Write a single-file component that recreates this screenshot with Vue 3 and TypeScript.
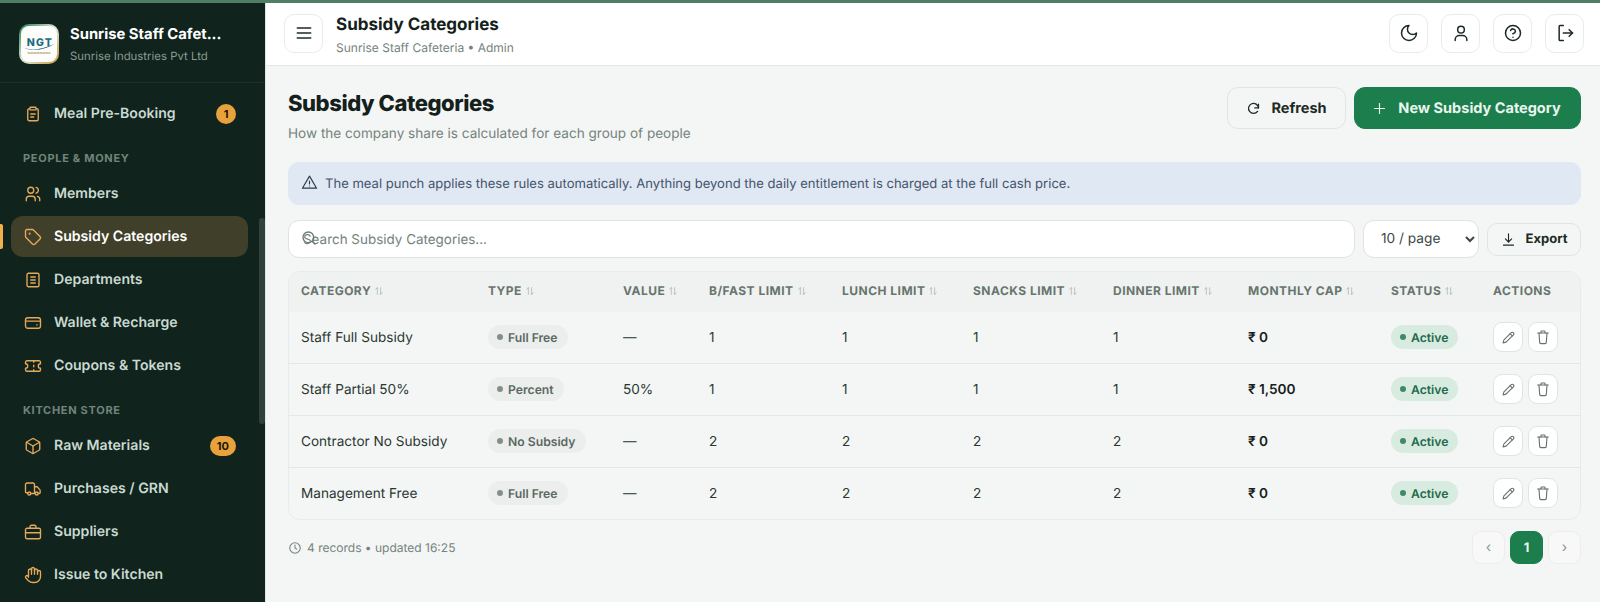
<script setup lang="ts">
type NavItem = { label: string; icon: string; badge?: string; active?: boolean }
type NavEntry = NavItem | { section: string }

const icons: Record<string, string[]> = {
  clipboard: ['M9 3h6a1 1 0 0 1 1 1v1h1a2 2 0 0 1 2 2v12a2 2 0 0 1-2 2H7a2 2 0 0 1-2-2V7a2 2 0 0 1 2-2h1V4a1 1 0 0 1 1-1z', 'M8 6.5h8', 'M9 12h6', 'M9 16h4'],
  users: ['M9 11a4 4 0 1 0 0-8 4 4 0 0 0 0 8z', 'M3 21v-2a4 4 0 0 1 4-4h4a4 4 0 0 1 4 4v2', 'M16 3.1a4 4 0 0 1 0 7.8', 'M21 21v-2a4 4 0 0 0-3-3.9'],
  tag: ['M12.6 2.6A2 2 0 0 0 11.2 2H4a2 2 0 0 0-2 2v7.2a2 2 0 0 0 .6 1.4l8.7 8.7a2.4 2.4 0 0 0 3.4 0l6.6-6.6a2.4 2.4 0 0 0 0-3.4z', 'M7.5 8a.5.5 0 1 0 0-1 .5.5 0 0 0 0 1z'],
  notebook: ['M6 3h12a2 2 0 0 1 2 2v14a2 2 0 0 1-2 2H6a2 2 0 0 1-2-2V5a2 2 0 0 1 2-2z', 'M9 8h6', 'M9 12h6', 'M9 16h6'],
  wallet: ['M5 5h14a3 3 0 0 1 3 3v8a3 3 0 0 1-3 3H5a3 3 0 0 1-3-3V8a3 3 0 0 1 3-3z', 'M2 9.5h20', 'M17 14.5h.5'],
  ticket: ['M2 9a3 3 0 0 1 0 6v2a2 2 0 0 0 2 2h16a2 2 0 0 0 2-2v-2a3 3 0 0 1 0-6V7a2 2 0 0 0-2-2H4a2 2 0 0 0-2 2z', 'M13 5v2', 'M13 17v2', 'M13 11v2'],
  box: ['M21 8a2 2 0 0 0-1-1.7l-7-4a2 2 0 0 0-2 0l-7 4A2 2 0 0 0 3 8v8a2 2 0 0 0 1 1.7l7 4a2 2 0 0 0 2 0l7-4a2 2 0 0 0 1-1.7z', 'M3.3 7 12 12l8.7-5', 'M12 22V12'],
  truck: ['M14 17V6a2 2 0 0 0-2-2H4a2 2 0 0 0-2 2v10a1 1 0 0 0 1 1h2', 'M14 9h3.5l4 4.5V17a1 1 0 0 1-1 1H19', 'M9 18h5', 'M7 20a2 2 0 1 0 0-4 2 2 0 0 0 0 4z', 'M17 20a2 2 0 1 0 0-4 2 2 0 0 0 0 4z'],
  briefcase: ['M4 7h16a2 2 0 0 1 2 2v10a2 2 0 0 1-2 2H4a2 2 0 0 1-2-2V9a2 2 0 0 1 2-2z', 'M8 7V5a2 2 0 0 1 2-2h4a2 2 0 0 1 2 2v2', 'M2 13h20'],
  hand: ['M18 11V6a2 2 0 0 0-4 0v-2a2 2 0 0 0-4 0v2a2 2 0 0 0-4 0v8', 'M14 6v5', 'M10 4v7', 'M18 8a2 2 0 0 1 4 0v6a8 8 0 0 1-8 8h-2c-2.8 0-4.5-.9-6-2.4l-3.6-3.6a2 2 0 0 1 2.8-2.8L6 15'],
  menu: ['M4 6h16', 'M4 12h16', 'M4 18h16'],
  moon: ['M12 3a6 6 0 0 0 9 9 9 9 0 1 1-9-9z'],
  user: ['M12 12a4 4 0 1 0 0-8 4 4 0 0 0 0 8z', 'M5 21v-1a5 5 0 0 1 5-5h4a5 5 0 0 1 5 5v1'],
  help: ['M12 21a9 9 0 1 0 0-18 9 9 0 0 0 0 18z', 'M9.1 9a3 3 0 0 1 5.8 1c0 2-3 3-3 3', 'M12 17h.01'],
  logout: ['M10 3H6a1 1 0 0 0-1 1v16a1 1 0 0 0 1 1h4', 'M10 12h11', 'M17 8l4 4-4 4'],
  refresh: ['M20 11a8 8 0 1 0-1.5 5.5', 'M20 5v6h-6'],
  plus: ['M12 5v14', 'M5 12h14'],
  alert: ['M12 3 2 20h20z', 'M12 10v4', 'M12 17h.01'],
  search: ['M11 19a8 8 0 1 0 0-16 8 8 0 0 0 0 16z', 'M21 21l-4.3-4.3'],
  download: ['M12 3v13', 'M7 11l5 5 5-5', 'M4 21h16'],
  pencil: ['M17 3a2.8 2.8 0 0 1 4 4L7.5 20.5 2 22l1.5-5.5z', 'M15 5l4 4'],
  trash: ['M4 6h16', 'M6 6l1 14a2 2 0 0 0 2 2h6a2 2 0 0 0 2-2l1-14', 'M9 6V4a1 1 0 0 1 1-1h4a1 1 0 0 1 1 1v2'],
  clock: ['M12 21a9 9 0 1 0 0-18 9 9 0 0 0 0 18z', 'M12 7v5l3 2'],
  sort: ['M8 4v16', 'M4 8l4-4 1 1', 'M16 20V4', 'M20 16l-4 4-1-1'],
}

const nav: NavEntry[] = [
  { label: 'Meal Pre-Booking', icon: 'clipboard', badge: '1' },
  { section: 'People & Money' },
  { label: 'Members', icon: 'users' },
  { label: 'Subsidy Categories', icon: 'tag', active: true },
  { label: 'Departments', icon: 'notebook' },
  { label: 'Wallet & Recharge', icon: 'wallet' },
  { label: 'Coupons & Tokens', icon: 'ticket' },
  { section: 'Kitchen Store' },
  { label: 'Raw Materials', icon: 'box', badge: '10' },
  { label: 'Purchases / GRN', icon: 'truck' },
  { label: 'Suppliers', icon: 'briefcase' },
  { label: 'Issue to Kitchen', icon: 'hand' },
]

const columns = [
  { label: 'Category', width: 187 },
  { label: 'Type', width: 135 },
  { label: 'Value', width: 86 },
  { label: 'B/Fast Limit', width: 133 },
  { label: 'Lunch Limit', width: 131 },
  { label: 'Snacks Limit', width: 140 },
  { label: 'Dinner Limit', width: 135 },
  { label: 'Monthly Cap', width: 143 },
  { label: 'Status', width: 102 },
  { label: 'Actions', width: 101, noSort: true },
]

const rows = [
  { name: 'Staff Full Subsidy', type: 'Full Free', value: '—', limit: 1, cap: '₹ 0' },
  { name: 'Staff Partial 50%', type: 'Percent', value: '50%', limit: 1, cap: '₹ 1,500' },
  { name: 'Contractor No Subsidy', type: 'No Subsidy', value: '—', limit: 2, cap: '₹ 0' },
  { name: 'Management Free', type: 'Full Free', value: '—', limit: 2, cap: '₹ 0' },
]

const topIcons = ['moon', 'user', 'help', 'logout']

function isSection(entry: NavEntry): entry is { section: string } {
  return 'section' in entry
}
</script>

<template>
  <div class="strip"></div>
  <div class="shell">
    <aside class="sidebar">
      <div class="brand">
        <div class="logo">
          <svg viewBox="0 0 40 40" width="40" height="40">
            <defs>
              <linearGradient id="ring" x1="0" y1="0" x2="1" y2="1">
                <stop offset="0" stop-color="#1f7a4d" />
                <stop offset="0.5" stop-color="#dfe5d8" />
                <stop offset="1" stop-color="#c59a3c" />
              </linearGradient>
            </defs>
            <rect width="40" height="40" rx="10" fill="url(#ring)" />
            <rect x="2" y="2" width="36" height="36" rx="8" fill="#fdfdfb" />
            <text x="21" y="22" text-anchor="middle" font-size="10.5" font-weight="800" letter-spacing="1.2" fill="#1c6a80">NGT</text>
            <path d="M3 23c9 4 19 3 32-3-9 6-22 8-32 3z" fill="#12566f" />
            <path d="M9 29h22" class="logo-line" />
          </svg>
        </div>
        <div class="brand-text">
          <div class="brand-name">Sunrise Staff Cafet...</div>
          <div class="brand-org">Sunrise Industries Pvt Ltd</div>
        </div>
      </div>
      <nav class="nav">
        <template v-for="entry in nav" :key="isSection(entry) ? entry.section : entry.label">
          <div v-if="isSection(entry)" class="nav-section">{{ entry.section }}</div>
          <div v-else class="nav-item" :class="{ 'nav-item--active': entry.active }">
            <svg class="nav-icon" viewBox="0 0 24 24"><path v-for="d in icons[entry.icon]" :key="d" :d="d" /></svg>
            <span class="nav-label">{{ entry.label }}</span>
            <span v-if="entry.badge" class="nav-badge">{{ entry.badge }}</span>
          </div>
        </template>
      </nav>
      <div class="nav-thumb"></div>
    </aside>

    <div class="content">
      <header class="topbar">
        <button class="icon-btn" type="button">
          <svg class="top-icon" viewBox="0 0 24 24"><path v-for="d in icons.menu" :key="d" :d="d" /></svg>
        </button>
        <div class="topbar-text">
          <div class="topbar-title">Subsidy Categories</div>
          <div class="topbar-sub">Sunrise Staff Cafeteria • Admin</div>
        </div>
        <div class="topbar-actions">
          <button v-for="name in topIcons" :key="name" class="icon-btn" type="button">
            <svg class="top-icon" viewBox="0 0 24 24"><path v-for="d in icons[name]" :key="d" :d="d" /></svg>
          </button>
        </div>
      </header>

      <main class="main">
        <div class="page-head">
          <div>
            <h1 class="page-title">Subsidy Categories</h1>
            <p class="page-sub">How the company share is calculated for each group of people</p>
          </div>
          <div class="page-actions">
            <button class="btn btn--ghost" type="button">
              <svg class="btn-icon" viewBox="0 0 24 24"><path v-for="d in icons.refresh" :key="d" :d="d" /></svg>
              Refresh
            </button>
            <button class="btn btn--primary" type="button">
              <svg class="btn-icon btn-icon--plus" viewBox="0 0 24 24"><path v-for="d in icons.plus" :key="d" :d="d" /></svg>
              New Subsidy Category
            </button>
          </div>
        </div>

        <div class="notice">
          <svg class="notice-icon" viewBox="0 0 24 24"><path v-for="d in icons.alert" :key="d" :d="d" /></svg>
          The meal punch applies these rules automatically. Anything beyond the daily entitlement is charged at the full cash price.
        </div>

        <div class="filters">
          <div class="search">
            <svg class="search-icon" viewBox="0 0 24 24"><path v-for="d in icons.search" :key="d" :d="d" /></svg>
            <input class="search-input" type="text" placeholder="Search Subsidy Categories..." />
          </div>
          <select class="page-size">
            <option>10 / page</option>
          </select>
          <button class="export" type="button">
            <svg class="export-icon" viewBox="0 0 24 24"><path v-for="d in icons.download" :key="d" :d="d" /></svg>
            Export
          </button>
        </div>

        <div class="table-wrap">
          <table class="table">
            <colgroup>
              <col v-for="col in columns" :key="col.label" :style="{ width: col.width + 'px' }" />
            </colgroup>
            <thead>
              <tr>
                <th v-for="col in columns" :key="col.label">
                  {{ col.label }}<svg v-if="!col.noSort" class="sort" viewBox="0 0 24 24"><path v-for="d in icons.sort" :key="d" :d="d" /></svg>
                </th>
              </tr>
            </thead>
            <tbody>
              <tr v-for="row in rows" :key="row.name">
                <td>{{ row.name }}</td>
                <td><span class="chip"><i class="dot"></i>{{ row.type }}</span></td>
                <td>{{ row.value }}</td>
                <td>{{ row.limit }}</td>
                <td>{{ row.limit }}</td>
                <td>{{ row.limit }}</td>
                <td>{{ row.limit }}</td>
                <td class="cap">{{ row.cap }}</td>
                <td><span class="chip chip--green"><i class="dot"></i>Active</span></td>
                <td>
                  <div class="row-actions">
                    <button class="row-btn" type="button">
                      <svg class="row-icon row-icon--pencil" viewBox="0 0 24 24"><path v-for="d in icons.pencil" :key="d" :d="d" /></svg>
                    </button>
                    <button class="row-btn" type="button">
                      <svg class="row-icon" viewBox="0 0 24 24"><path v-for="d in icons.trash" :key="d" :d="d" /></svg>
                    </button>
                  </div>
                </td>
              </tr>
            </tbody>
          </table>
        </div>

        <div class="table-foot">
          <div class="records">
            <svg class="clock" viewBox="0 0 24 24"><path v-for="d in icons.clock" :key="d" :d="d" /></svg>
            4 records • updated 16:25
          </div>
          <div class="pager">
            <button class="page-btn" type="button">‹</button>
            <button class="page-btn page-btn--on" type="button">1</button>
            <button class="page-btn" type="button">›</button>
          </div>
        </div>
      </main>
    </div>
  </div>
</template>

<style>
html,
body {
  margin: 0;
  height: 100%;
  overflow: hidden;
}
</style>

<style scoped>
* {
  box-sizing: border-box;
}
svg {
  fill: none;
  stroke: currentColor;
  stroke-width: 2;
  stroke-linecap: round;
  stroke-linejoin: round;
  flex: none;
}
button,
input,
select {
  font-family: inherit;
  text-rendering: geometricPrecision;
}
.strip {
  height: 3px;
  background: #4f7f63;
}
.shell {
  display: flex;
  height: 599px;
  overflow: hidden;
  font-family: Inter, "Liberation Sans", sans-serif;
  text-rendering: geometricPrecision;
  color: #14211b;
  background: #f4f6f5;
}

/* sidebar */
.sidebar {
  position: relative;
  flex: none;
  width: 266px;
  background: #10231c;
  border-right: 1px solid #dfe4e1;
  overflow: hidden;
}
.brand {
  display: flex;
  align-items: center;
  gap: 11px;
  height: 80px;
  padding: 2px 19px 0;
  border-bottom: 1px solid #1d3029;
}
.logo {
  width: 40px;
  height: 40px;
  flex: none;
}
.logo svg {
  stroke: none;
  display: block;
  font-family: Inter, sans-serif;
}
.logo path {
  stroke: none;
}
.logo .logo-line {
  stroke: #9a8a55;
  stroke-width: 1;
  stroke-dasharray: 2 1;
}
.brand-name {
  font-size: 14.8px;
  font-weight: 700;
  color: #fff;
  line-height: 20px;
  white-space: nowrap;
}
.brand-org {
  margin-top: 4px;
  font-size: 11.4px;
  line-height: 16px;
  color: #8b9c94;
  white-space: nowrap;
}
.nav {
  display: flex;
  flex-direction: column;
  gap: 2px;
  padding: 10px 17px 0 11px;
}
.nav-section {
  padding: 14px 12px 5px;
  font-size: 11px;
  font-weight: 700;
  line-height: 16px;
  letter-spacing: 0.7px;
  text-transform: uppercase;
  color: #71857b;
}
.nav-item {
  position: relative;
  display: flex;
  align-items: center;
  flex: none;
  height: 41px;
  padding: 0 12px 0 13px;
  border-radius: 12px;
  font-size: 14.1px;
  font-weight: 600;
  color: #c9dad2;
}
.nav-item--active {
  background: #40402a;
  color: #fff;
}
.nav-item--active::before {
  content: "";
  position: absolute;
  left: -11px;
  top: 8px;
  width: 3px;
  height: 25px;
  border-radius: 0 2px 2px 0;
  background: #f0b14a;
}
.nav-icon {
  width: 18px;
  height: 18px;
  margin-right: 12px;
  stroke: #e6a95a;
  stroke-width: 1.8;
}
.nav-label {
  flex: 1;
  white-space: nowrap;
}
.nav-badge {
  min-width: 20px;
  height: 20px;
  padding: 0 7px;
  border-radius: 10px;
  background: #e9a23b;
  color: #1b1608;
  font-size: 11px;
  font-weight: 700;
  line-height: 20px;
  text-align: center;
}
.nav-thumb {
  position: absolute;
  left: 259px;
  top: 215px;
  width: 6px;
  height: 206px;
  border-radius: 3px;
  background: #2e423a;
}

/* top bar */
.content {
  flex: 1;
  min-width: 0;
  display: flex;
  flex-direction: column;
}
.topbar {
  display: flex;
  align-items: center;
  flex: none;
  height: 63px;
  padding: 0 16px 2px 18px;
  background: #fff;
  border-bottom: 1px solid #e3e7e5;
}
.icon-btn {
  display: inline-flex;
  align-items: center;
  justify-content: center;
  width: 39px;
  height: 39px;
  padding: 0;
  border: 1px solid #e8ecea;
  border-radius: 10px;
  background: #fff;
  color: #1d2a24;
}
.top-icon {
  width: 20px;
  height: 20px;
  stroke-width: 1.8;
}
.topbar-text {
  margin: 4px 0 0 13px;
}
.topbar-title {
  font-size: 17px;
  font-weight: 700;
  line-height: 24px;
  color: #14211b;
}
.topbar-sub {
  margin-top: 2px;
  font-size: 12px;
  line-height: 18px;
  color: #75837c;
}
.topbar-actions {
  display: flex;
  gap: 13px;
  margin-left: auto;
}

/* main */
.main {
  flex: 1;
  padding: 21px 19px 0 22px;
}
.page-head {
  display: flex;
  justify-content: space-between;
  height: 75px;
}
.page-title {
  margin: 3px 0 0;
  font-size: 22px;
  font-weight: 800;
  line-height: 28px;
  letter-spacing: -0.44px;
  color: #14211b;
}
.page-sub {
  margin: 6px 0 0;
  font-size: 13.57px;
  line-height: 20px;
  color: #75837c;
}
.page-actions {
  display: flex;
  gap: 8px;
  height: 42px;
}
.btn {
  display: inline-flex;
  align-items: center;
  justify-content: center;
  gap: 10px;
  border-radius: 11px;
  font-size: 14.5px;
  font-weight: 700;
  white-space: nowrap;
}
.btn--ghost {
  width: 119px;
  border: 1px solid #e0e4e2;
  background: #f4f6f5;
  color: #1d2a24;
}
.btn--primary {
  width: 227px;
  padding: 0 3px 0 0;
  border: 1px solid #1c7d4d;
  background: #1c7d4d;
  color: #eaf5ef;
}
.btn-icon {
  width: 15px;
  height: 15px;
  stroke-width: 2;
}
.btn-icon--plus {
  width: 17px;
  height: 17px;
  stroke-width: 1.6;
}
.notice {
  display: flex;
  align-items: center;
  height: 43px;
  padding: 0 13px;
  border-radius: 11px;
  background: #e0e8f4;
  color: #44546a;
  font-size: 13.05px;
}
.notice-icon {
  width: 17px;
  height: 17px;
  margin: -3px 7px 0 0;
  stroke: #2b3a4f;
  stroke-width: 1.6;
}
.filters {
  display: flex;
  align-items: center;
  gap: 8px;
  margin-top: 15px;
}
.search {
  position: relative;
  flex: 1;
}
.search-icon {
  position: absolute;
  left: 13px;
  top: 10px;
  width: 16px;
  height: 16px;
  color: #6d7a74;
}
.search-input {
  display: block;
  width: 100%;
  height: 38px;
  padding: 1px 15px 0 14px;
  border: 1px solid #dfe3e1;
  border-radius: 11px;
  background: #fff;
  font-size: 13.45px;
  color: #14211b;
  outline: none;
}
.search-input::placeholder {
  color: #75837c;
}
.page-size {
  width: 116px;
  height: 38px;
  padding: 0 10px 0 13px;
  border: 1px solid #dfe3e1;
  border-radius: 11px;
  background: #fff;
  font-size: 13.7px;
  color: #3b4742;
}
.export {
  display: inline-flex;
  align-items: center;
  justify-content: center;
  gap: 10px;
  width: 94px;
  height: 33px;
  border: 1px solid #e0e4e2;
  border-radius: 10px;
  background: #f4f6f5;
  color: #1d2a24;
  font-size: 13px;
  font-weight: 700;
}
.export-icon {
  width: 15px;
  height: 15px;
  stroke-width: 1.8;
}

/* table */
.table-wrap {
  margin-top: 13px;
  border: 1px solid #e7ebe9;
  border-radius: 12px;
  overflow: hidden;
}
.table {
  width: 100%;
  table-layout: fixed;
  border-collapse: collapse;
}
th {
  height: 40px;
  padding: 0 0 3px 12px;
  background: #eff2f0;
  font-size: 12px;
  font-weight: 700;
  letter-spacing: 0.48px;
  text-align: left;
  text-transform: uppercase;
  white-space: nowrap;
  color: #67756e;
}
.sort {
  width: 10px;
  height: 10px;
  margin-left: 3px;
  vertical-align: -1px;
  color: #b2bbb7;
}
td {
  height: 52px;
  padding: 2px 0 0 12px;
  border-top: 1px solid #e4e8e6;
  font-size: 13.6px;
  color: #2a3631;
  white-space: nowrap;
}
tbody tr:first-child td {
  height: 51px;
  border-top: none;
}
.cap {
  font-weight: 600;
  color: #14211b;
}
.chip {
  display: inline-flex;
  align-items: center;
  gap: 5px;
  height: 24px;
  margin-top: -2px;
  padding: 0 10px 0 9px;
  border-radius: 12px;
  background: #ebeeec;
  color: #5b6862;
  font-size: 12.2px;
  font-weight: 600;
  vertical-align: middle;
}
.chip--green {
  background: #d8ebe0;
  color: #22694a;
}
.dot {
  width: 6px;
  height: 6px;
  border-radius: 50%;
  background: #848f8a;
}
.chip--green .dot {
  background: #3f8a66;
}
.row-actions {
  display: flex;
  gap: 5px;
  margin-top: -2px;
}
.row-btn {
  display: inline-flex;
  align-items: center;
  justify-content: center;
  width: 30px;
  height: 30px;
  padding: 0;
  border: 1px solid #e0e4e2;
  border-radius: 9px;
  background: #fff;
  color: #66716c;
}
.row-icon {
  width: 16px;
  height: 16px;
  stroke-width: 1.7;
}
.row-icon--pencil {
  width: 13px;
  height: 13px;
  stroke-width: 2;
}
.table-foot {
  display: flex;
  align-items: center;
  justify-content: space-between;
  margin-top: 11px;
}
.records {
  display: flex;
  align-items: center;
  gap: 5px;
  font-size: 12px;
  color: #75837c;
}
.clock {
  width: 14px;
  height: 14px;
  stroke-width: 1.8;
}
.pager {
  display: flex;
  gap: 5px;
}
.page-btn {
  width: 33px;
  height: 33px;
  padding: 0;
  border: 1px solid #ebeeec;
  border-radius: 9px;
  background: #f7f8f7;
  color: #8a9590;
  font-size: 14px;
}
.page-btn--on {
  border-color: #1c7d4d;
  background: #1c7d4d;
  color: #eaf5ef;
  font-size: 13px;
  font-weight: 700;
}
</style>
